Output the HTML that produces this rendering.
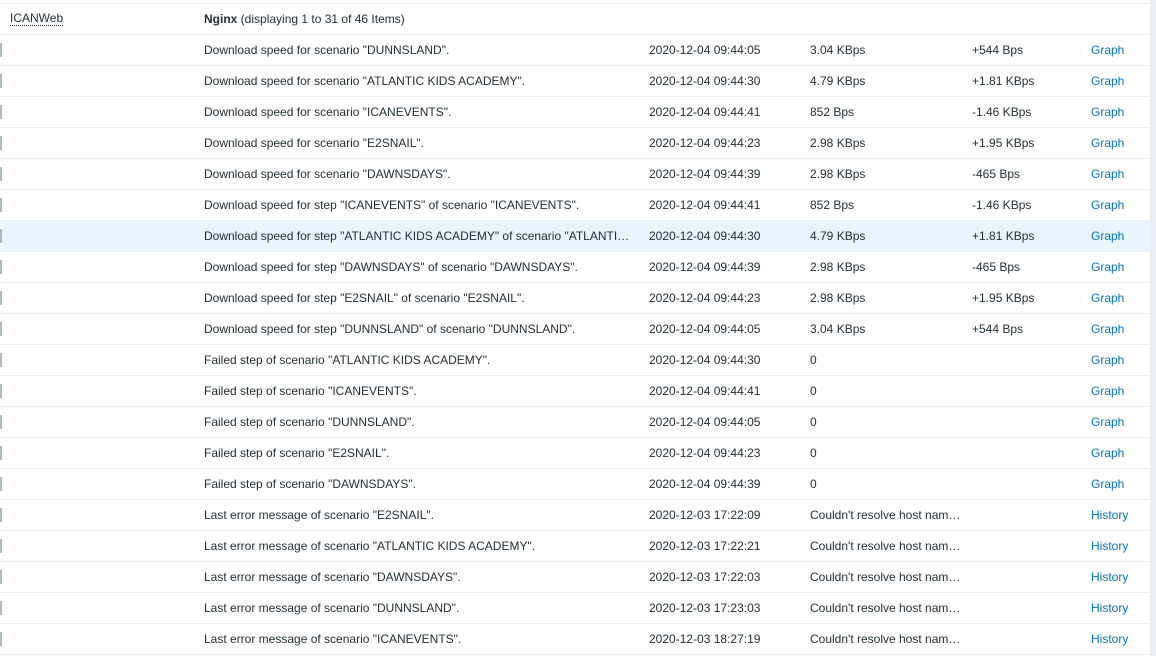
<!DOCTYPE html>
<html><head><style>
body{margin:0;width:1156px;height:656px;overflow:hidden;background:#fff;font-family:"Liberation Sans",Arial,sans-serif;font-size:12px;color:#1f2c33;position:relative}
.r{position:absolute;left:0;width:1150px;height:30px;border-bottom:1px solid #ebeef0}
.r span{position:absolute;top:8px;white-space:nowrap}
.m{position:absolute;left:0;top:8px;width:2px;height:14px;background:#acbbc2}
a{color:#0275b8;text-decoration:none}
.sb{position:absolute;right:0;top:0;width:6px;height:656px;background:#ebeef0}
</style></head><body>
<div style="position:absolute;left:0;top:3px;width:1150px;height:0;border-top:1px solid #ebeef0"></div>
<div class="r" style="top:4px"><span style="left:10px;border-bottom:1px dotted #1f2c33;line-height:13px">ICANWeb</span><span style="left:204px"><b>Nginx</b> (displaying 1 to 31 of 46 Items)</span></div>
<div id="rows"></div>
<div class="sb"></div>
<script>
var d=[
['Download speed for scenario "DUNNSLAND".','2020-12-04 09:44:05','3.04 KBps','+544 Bps','Graph'],
['Download speed for scenario "ATLANTIC KIDS ACADEMY".','2020-12-04 09:44:30','4.79 KBps','+1.81 KBps','Graph'],
['Download speed for scenario "ICANEVENTS".','2020-12-04 09:44:41','852 Bps','-1.46 KBps','Graph'],
['Download speed for scenario "E2SNAIL".','2020-12-04 09:44:23','2.98 KBps','+1.95 KBps','Graph'],
['Download speed for scenario "DAWNSDAYS".','2020-12-04 09:44:39','2.98 KBps','-465 Bps','Graph'],
['Download speed for step "ICANEVENTS" of scenario "ICANEVENTS".','2020-12-04 09:44:41','852 Bps','-1.46 KBps','Graph'],
['Download speed for step "ATLANTIC KIDS ACADEMY" of scenario "ATLANTI…','2020-12-04 09:44:30','4.79 KBps','+1.81 KBps','Graph'],
['Download speed for step "DAWNSDAYS" of scenario "DAWNSDAYS".','2020-12-04 09:44:39','2.98 KBps','-465 Bps','Graph'],
['Download speed for step "E2SNAIL" of scenario "E2SNAIL".','2020-12-04 09:44:23','2.98 KBps','+1.95 KBps','Graph'],
['Download speed for step "DUNNSLAND" of scenario "DUNNSLAND".','2020-12-04 09:44:05','3.04 KBps','+544 Bps','Graph'],
['Failed step of scenario "ATLANTIC KIDS ACADEMY".','2020-12-04 09:44:30','0','','Graph'],
['Failed step of scenario "ICANEVENTS".','2020-12-04 09:44:41','0','','Graph'],
['Failed step of scenario "DUNNSLAND".','2020-12-04 09:44:05','0','','Graph'],
['Failed step of scenario "E2SNAIL".','2020-12-04 09:44:23','0','','Graph'],
['Failed step of scenario "DAWNSDAYS".','2020-12-04 09:44:39','0','','Graph'],
['Last error message of scenario "E2SNAIL".','2020-12-03 17:22:09','Couldn\'t resolve host nam…','','History'],
['Last error message of scenario "ATLANTIC KIDS ACADEMY".','2020-12-03 17:22:21','Couldn\'t resolve host nam…','','History'],
['Last error message of scenario "DAWNSDAYS".','2020-12-03 17:22:03','Couldn\'t resolve host nam…','','History'],
['Last error message of scenario "DUNNSLAND".','2020-12-03 17:23:03','Couldn\'t resolve host nam…','','History'],
['Last error message of scenario "ICANEVENTS".','2020-12-03 18:27:19','Couldn\'t resolve host nam…','','History']];
var h='';d.forEach(function(x,i){h+='<div class="r" style="top:'+(35+31*i)+'px'+(i==6?';background:#e8f5ff':'')+'"><div class="m"></div><span style="left:204px">'+x[0]+'</span><span style="left:649px">'+x[1]+'</span><span style="left:810px">'+x[2]+'</span><span style="left:972px">'+x[3]+'</span><span style="left:1091px"><a>'+x[4]+'</a></span></div>'});
document.getElementById('rows').innerHTML=h;
</script>
</body></html>
